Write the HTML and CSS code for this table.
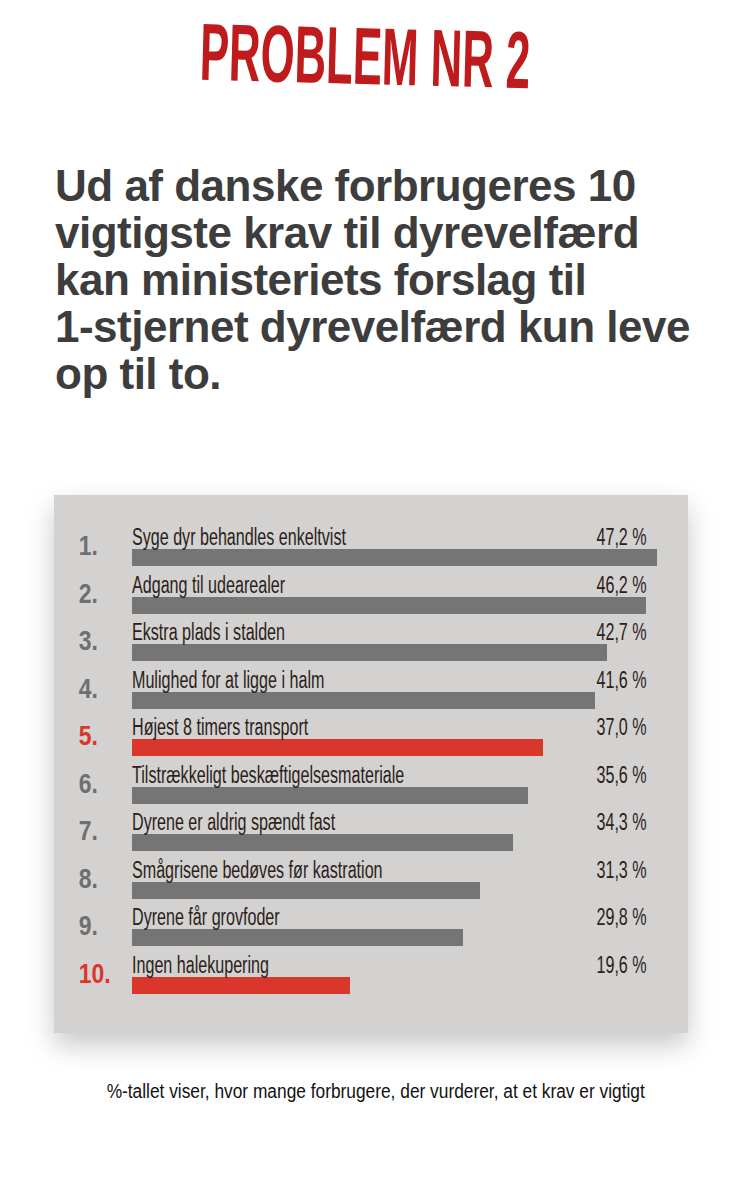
FILE: index.html
```html
<!DOCTYPE html>
<html lang="da">
<head>
<meta charset="utf-8">
<title>Problem nr 2</title>
<link rel="stylesheet" href="styles.css">
</head>
<body>
<div class="page">
  <header class="title-wrap">
    <h1 class="title">PROBLEM NR 2</h1>
  </header>
  <p class="headline"><span>Ud af danske forbrugeres 10</span> <span>vigtigste krav til dyrevelfærd</span> <span>kan ministeriets forslag til</span> <span>1-stjernet dyrevelfærd kun leve</span> <span>op til to.</span></p>
  <section class="panel">
    <div class="row"><span class="num">1.</span><div class="body"><div class="line"><span class="label">Syge dyr behandles enkeltvist</span><span class="pct">47,2 %</span></div><div class="bar" style="width:525px"></div></div></div>
    <div class="row"><span class="num">2.</span><div class="body"><div class="line"><span class="label">Adgang til udearealer</span><span class="pct">46,2 %</span></div><div class="bar" style="width:514px"></div></div></div>
    <div class="row"><span class="num">3.</span><div class="body"><div class="line"><span class="label">Ekstra plads i stalden</span><span class="pct">42,7 %</span></div><div class="bar" style="width:475px"></div></div></div>
    <div class="row"><span class="num">4.</span><div class="body"><div class="line"><span class="label">Mulighed for at ligge i halm</span><span class="pct">41,6 %</span></div><div class="bar" style="width:463px"></div></div></div>
    <div class="row hl"><span class="num">5.</span><div class="body"><div class="line"><span class="label">Højest 8 timers transport</span><span class="pct">37,0 %</span></div><div class="bar" style="width:411px"></div></div></div>
    <div class="row"><span class="num">6.</span><div class="body"><div class="line"><span class="label">Tilstrækkeligt beskæftigelsesmateriale</span><span class="pct">35,6 %</span></div><div class="bar" style="width:396px"></div></div></div>
    <div class="row"><span class="num">7.</span><div class="body"><div class="line"><span class="label">Dyrene er aldrig spændt fast</span><span class="pct">34,3 %</span></div><div class="bar" style="width:381px"></div></div></div>
    <div class="row"><span class="num">8.</span><div class="body"><div class="line"><span class="label">Smågrisene bedøves før kastration</span><span class="pct">31,3 %</span></div><div class="bar" style="width:348px"></div></div></div>
    <div class="row"><span class="num">9.</span><div class="body"><div class="line"><span class="label">Dyrene får grovfoder</span><span class="pct">29,8 %</span></div><div class="bar" style="width:331px"></div></div></div>
    <div class="row hl"><span class="num">10.</span><div class="body"><div class="line"><span class="label">Ingen halekupering</span><span class="pct">19,6 %</span></div><div class="bar" style="width:218px"></div></div></div>
  </section>
  <div class="foot"><p class="footnote">%-tallet viser, hvor mange forbrugere, der vurderer, at et krav er vigtigt</p></div>
</div>
</body>
</html>
```
FILE: styles.css
```css
html, body {
  margin: 0;
  padding: 0;
  background: #ffffff;
}
.page {
  width: 750px;
  height: 1200px;
  overflow: hidden;
  font-family: "Liberation Sans", Arial, sans-serif;
}
.title-wrap {
  display: flex;
  justify-content: center;
  padding: 16px 20px 0 0;
  height: 100px;
  box-sizing: border-box;
}
.title {
  margin: 0;
  font-size: 81px;
  line-height: 81px;
  font-weight: bold;
  color: #bf1a1c;
  display: inline-block;
  transform: rotate(1.5deg) scaleX(0.54);
  transform-origin: center;
  white-space: nowrap;
}
.headline {
  margin: 62px 0 0 55px;
  font-size: 44px;
  line-height: 47px;
  font-weight: bold;
  letter-spacing: -0.5px;
  color: #3d3d3d;
}
.headline span {
  display: block;
  white-space: nowrap;
}
.panel {
  margin: 98px 0 0 54px;
  width: 634px;
  box-sizing: border-box;
  padding: 30px 0 39px 24px;
  background: #d3d2d1;
  box-shadow: 0 12px 26px rgba(0, 0, 0, 0.22);
  display: flex;
  flex-direction: column;
  gap: 6.5px;
}
.row {
  display: grid;
  grid-template-columns: 54px 1fr;
  align-items: end;
}
.num {
  display: inline-block;
  font-size: 28px;
  line-height: 28px;
  font-weight: bold;
  color: #6f6f6f;
  padding: 0 0 6px 1px;
  transform: scaleX(0.82);
  transform-origin: left bottom;
  white-space: nowrap;
}
.line {
  display: grid;
  grid-template-columns: minmax(0, 1fr) auto;
  align-items: baseline;
  height: 24px;
  padding-right: 41px;
}
.label, .pct {
  display: inline-block;
  font-size: 23px;
  line-height: 24px;
  color: #2b2119;
  white-space: nowrap;
  transform: scaleX(0.7);
}
.label {
  transform-origin: left center;
}
.pct {
  transform-origin: right center;
}
.bar {
  height: 17px;
  background: #757575;
}
.hl .num { color: #d9372c; }
.hl .bar { background: #d9372c; }
.foot {
  display: flex;
  justify-content: center;
  margin-top: 46px;
  padding-left: 1px;
}
.footnote {
  margin: 0;
  display: inline-block;
  font-size: 20px;
  line-height: 24px;
  color: #111111;
  white-space: nowrap;
  transform: scaleX(0.866);
  transform-origin: center;
}
```
